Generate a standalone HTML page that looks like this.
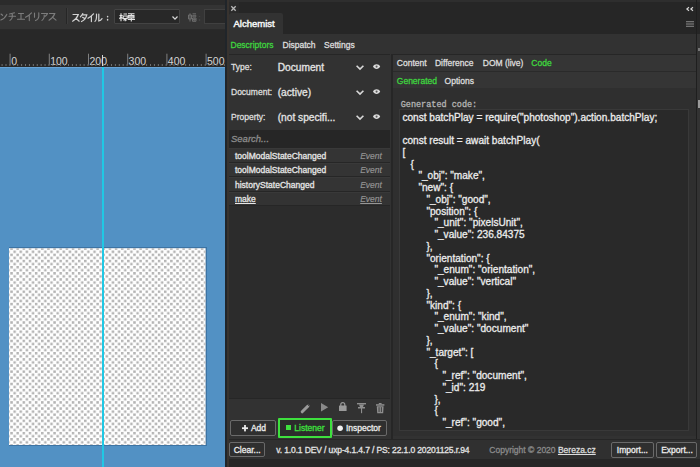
<!DOCTYPE html>
<html><head><meta charset="utf-8">
<style>
*{margin:0;padding:0;box-sizing:border-box}
html,body{width:700px;height:467px;overflow:hidden;background:#262626}
body{position:relative;font-family:"Liberation Sans",sans-serif;font-size:8.5px;color:#dcdcdc;-webkit-text-stroke:0.3px}
.a{position:absolute}
.t{position:absolute;white-space:pre;line-height:1}
.g{color:#3fd43f}
.btn{position:absolute;border:1.2px solid #6a6a6a;border-radius:2px;background:#2f2f2f}
#code{position:absolute;left:402.4px;top:111.66px;width:287px;height:319px;overflow:hidden;font-size:10.1px;line-height:11.75px;color:#ececec}
#code div{height:11.75px;white-space:pre}
svg{position:absolute;overflow:visible}
</style></head><body>

<!-- ===== Photoshop left area ===== -->
<div class="a" style="left:0;top:0;width:226px;height:5px;background:#2b2b2b"></div>
<div class="a" style="left:0;top:5px;width:226px;height:25px;background:#343434"></div>
<div class="a" style="left:0;top:29px;width:226px;height:1px;background:#2a2a2a"></div>
<div class="a" style="left:0;top:30px;width:226px;height:37px;background:#282828"></div>

<!-- options bar katakana: ンチエイリアス -->
<svg style="left:0;top:12px" width="58" height="9" viewBox="0 0 58 9" fill="none" stroke="#7c7c7c" stroke-width="1.1" stroke-linecap="round">
  <path d="M1 2 L2.6 3.3 M0.8 8 Q4.5 6.8 6.8 2.4"/>
  <path d="M14.5 0.8 Q11.5 1.8 9.5 2 M9 4.3 H15.5 M12.3 2 V5 Q12 7.2 10 8.4"/>
  <path d="M18.5 1.5 H23.5 M21 1.5 V7.2 M17.5 7.2 H24.5"/>
  <path d="M31.5 0.8 Q29 3.5 25.5 5.3 M29.3 3.3 V8.6"/>
  <path d="M34.5 1 V5.2 M38.8 0.8 V4.5 Q38.5 7.5 35.5 8.6"/>
  <path d="M41.5 1.5 H47.5 Q47 3 45.3 4.2 M44.2 3 V5 Q43.8 7.2 42 8.4"/>
  <path d="M49.5 1.5 H54.8 Q53.5 5.5 49 8.2 M52.4 5.2 L56 8.2"/>
</svg>
<div class="a" style="left:65.5px;top:8px;width:1px;height:16px;background:#262626"></div>
<div class="a" style="left:66.5px;top:8px;width:1px;height:16px;background:#3c3c3c"></div>
<!-- スタイル： -->
<svg style="left:72px;top:12.5px" width="40" height="9" viewBox="0 0 40 9" fill="none" stroke="#d2d2d2" stroke-width="1.2" stroke-linecap="round">
  <path d="M1 1.5 H6.3 Q5 5.5 0.6 8.2 M3.9 5.2 L7.2 8.2"/>
  <path d="M10.8 0.6 Q9.8 2.6 8.4 3.8 M10.3 1.8 H14.8 Q13.8 6.4 9.5 8.5 M10.5 4.3 L13 5.6"/>
  <path d="M21.5 0.8 Q19 3.5 16 5.3 M19.4 3.3 V8.6"/>
  <path d="M24.5 1 V4.5 Q24.3 7.3 23 8.4 M26.8 1 V8 Q28.8 7.5 30 5.6"/>
  <path d="M35.6 3.4 V3.7 M35.6 6.6 V6.9" stroke-width="1.5"/>
</svg>
<!-- dropdown -->
<div class="a" style="left:113.6px;top:9px;width:66.3px;height:15px;background:#282828;border:1px solid #444;border-radius:1px"></div>
<svg style="left:119.3px;top:13px" width="17" height="8.5" viewBox="0 0 17 8.5" fill="none" stroke="#e2e2e2" stroke-width="1.1">
  <path d="M0.5 2.5 H3.5 M2 0.3 V8.3 M2 3 L0.5 6 M2 3.5 L3.5 5.5 M4.5 1 H8 M4.2 3 H8.2 V5.5 H4.2 Z M4.5 7.5 L5.5 6.2 M7.5 7.5 L6.5 6.2 M6.2 5.5 V8.3"/>
  <path d="M9 0.8 H15.5 M9.4 2.5 H15 V5 H9.4 Z M12.3 0.3 V2.5 M8.8 6.5 H16 M12.3 5 V8.5 M10 3.8 H14.5"/>
</svg>
<svg style="left:172.4px;top:16px" width="6" height="4" viewBox="0 0 6 4" fill="none" stroke="#d8d8d8" stroke-width="1.2"><path d="M0.5 0.5 L3 3.2 L5.5 0.5"/></svg>
<!-- 幅： -->
<svg style="left:187.5px;top:13px" width="14" height="9" viewBox="0 0 14 9" fill="none" stroke="#6c6c6c" stroke-width="1">
  <path d="M0.5 2 H3.5 V6 H0.5 Z M2 0.3 V8.5 M4.5 0.8 H8 M4.8 2.3 H7.8 V3.8 H4.8 Z M4.5 5 H8 V8.3 H4.5 Z M6.2 5 V8.3 M4.5 6.7 H8"/>
  <path d="M11.5 3.2 V3.6 M11.5 6.8 V7.2" stroke-width="1.4"/>
</svg>
<div class="a" style="left:203.5px;top:8.5px;width:24px;height:15px;background:#282828;border:1px solid #404040"></div>

<!-- ruler -->
<svg style="left:0;top:50px" width="226" height="17" viewBox="0 0 226 17">
  <g fill="#808080">
    <rect x="9.6" y="3.7" width="1" height="11"/>
    <rect x="48.8" y="3.7" width="1" height="11"/>
    <rect x="88" y="3.7" width="1" height="11"/>
    <rect x="127.2" y="3.7" width="1" height="11"/>
    <rect x="166.4" y="3.7" width="1" height="11"/>
    <rect x="205.6" y="3.7" width="1" height="11"/>
  </g>
  <g font-family="Liberation Sans" font-size="10.5" fill="#d4d4d4">
    <text x="11.2" y="14.6">0</text>
    <text x="50.2" y="14.6">100</text>
    <text x="89.5" y="14.6">200</text>
    <text x="128.6" y="14.6">300</text>
    <text x="167.8" y="14.6">400</text>
    <text x="207" y="14.6">500</text>
  </g>
</svg>
<div class="a" style="left:0;top:64.2px;width:226px;height:1.5px;background-image:linear-gradient(90deg,#707070 0,#707070 1.4px,transparent 1.4px);background-size:3.92px 2px;background-position:1.6px 0"></div>

<!-- canvas -->
<div class="a" style="left:0;top:67px;width:226px;height:400px;background:#5291c4"></div>
<div class="a" style="left:0;top:67px;width:226px;height:1px;background:#68a4d6"></div>

<!-- document -->
<div class="a" style="left:8.6px;top:246.8px;width:198.2px;height:199.2px;background:#3d74a4"></div>
<svg style="left:9.4px;top:247.6px" width="196.6" height="197.2" viewBox="0 0 197 197.2">
<defs><pattern id="ck" patternUnits="userSpaceOnUse" x="1.29" y="-0.72" width="6.16" height="6.16"><rect x="0" y="0" width="2.5" height="2.5" fill="#b4b4b4"/><rect x="3.08" y="3.08" width="2.5" height="2.5" fill="#b4b4b4"/></pattern></defs>
<rect width="197" height="197.2" fill="#fff"/><rect width="197" height="197.2" fill="url(#ck)"/>
</svg>

<!-- guide -->
<div class="a" style="left:101.6px;top:55px;width:1.6px;height:11px;background:#d6d6d6"></div>
<div class="a" style="left:102px;top:67px;width:2.2px;height:400px;background:#20c8e4"></div>

<!-- ===== Alchemist panel ===== -->
<div class="a" style="left:225.3px;top:0;width:1.9px;height:467px;background:#20252a"></div>
<div class="a" style="left:227.2px;top:0;width:1.6px;height:467px;background:#38332f"></div>
<div class="a" style="left:228.8px;top:0;width:471.2px;height:34px;background:#262626"></div>
<div class="a" style="left:228.8px;top:0;width:471.2px;height:2px;background:#2e2e2e"></div>
<!-- close -->
<div class="a" style="left:228.8px;top:2px;width:10px;height:11px;background:#2a2a2a"></div>
<svg style="left:230.6px;top:6.2px" width="5" height="5" viewBox="0 0 5 5" stroke="#b8b8b8" stroke-width="1.3"><path d="M0.3 0.3 L4.7 4.7 M4.7 0.3 L0.3 4.7"/></svg>
<!-- tab -->
<div class="a" style="left:229px;top:13.3px;width:53.5px;height:20.7px;background:#323232;border-radius:2px 2px 0 0"></div>
<div class="t" style="left:233.5px;top:19px;font-size:9.5px;color:#f6f6f6;-webkit-text-stroke:0.45px">Alchemist</div>
<!-- << and menu -->
<svg style="left:686.2px;top:6.7px" width="8" height="4" viewBox="0 0 8 4" fill="none" stroke="#d8d8d8" stroke-width="1.1"><path d="M3 0.2 L0.8 2 L3 3.8 M7 0.2 L4.8 2 L7 3.8"/></svg>
<svg style="left:685.5px;top:21px" width="8" height="6" viewBox="0 0 8 6" fill="#737373"><rect x="0" y="0" width="8" height="1.3"/><rect x="0" y="2.35" width="8" height="1.3"/><rect x="0" y="4.7" width="8" height="1.3"/></svg>
<div class="a" style="left:696.2px;top:0;width:1.2px;height:439px;background:#1f1f1f"></div>

<div class="a" style="left:228.8px;top:34px;width:467.4px;height:405px;background:#323232"></div>
<div class="a" style="left:697.4px;top:34px;width:2.6px;height:405px;background:#333"></div>
<div class="a" style="left:698px;top:48px;width:2px;height:3px;background:#777"></div>
<div class="a" style="left:697.5px;top:100px;width:2.5px;height:8px;background:#9a9a9a"></div>

<!-- top nav -->
<div class="t g" style="left:230.5px;top:40.8px">Descriptors</div>
<div class="t" style="left:282.5px;top:40.8px">Dispatch</div>
<div class="t" style="left:324px;top:40.8px">Settings</div>

<!-- ===== left pane ===== -->
<div class="a" style="left:228.8px;top:53.5px;width:161.7px;height:1px;background:#262626"></div>
<div class="t" style="left:231px;top:62.8px">Type:</div>
<div class="t" style="left:231px;top:87.8px">Document:</div>
<div class="t" style="left:231px;top:112.8px">Property:</div>
<div class="t" style="left:277.7px;top:62.9px;font-size:10.2px;color:#e4e4e4">Document</div>
<div class="t" style="left:277.7px;top:87.9px;font-size:10.2px;color:#e4e4e4">(active)</div>
<div class="t" style="left:277.7px;top:112.9px;font-size:10.2px;color:#e4e4e4">(not specifi...</div>
<!-- chevrons + eyes -->
<svg style="left:356.3px;top:64.9px" width="8" height="5" viewBox="0 0 8 5" fill="none" stroke="#d8d8d8" stroke-width="1.6"><path d="M0.6 0.7 L4 4.1 L7.4 0.7"/></svg>
<svg style="left:356.3px;top:89.9px" width="8" height="5" viewBox="0 0 8 5" fill="none" stroke="#d8d8d8" stroke-width="1.6"><path d="M0.6 0.7 L4 4.1 L7.4 0.7"/></svg>
<svg style="left:356.3px;top:114.9px" width="8" height="5" viewBox="0 0 8 5" fill="none" stroke="#d8d8d8" stroke-width="1.6"><path d="M0.6 0.7 L4 4.1 L7.4 0.7"/></svg>
<svg style="left:372.6px;top:64px" width="7.2" height="5.2" viewBox="0 0 7.2 5.2"><path d="M0 2.6 C1.4 -0.6 5.8 -0.6 7.2 2.6 C5.8 5.8 1.4 5.8 0 2.6 Z" fill="#dcdcdc"/><circle cx="3.6" cy="2.6" r="1.05" fill="#5a5a5a"/></svg>
<svg style="left:372.6px;top:89px" width="7.2" height="5.2" viewBox="0 0 7.2 5.2"><path d="M0 2.6 C1.4 -0.6 5.8 -0.6 7.2 2.6 C5.8 5.8 1.4 5.8 0 2.6 Z" fill="#dcdcdc"/><circle cx="3.6" cy="2.6" r="1.05" fill="#5a5a5a"/></svg>
<svg style="left:372.6px;top:114px" width="7.2" height="5.2" viewBox="0 0 7.2 5.2"><path d="M0 2.6 C1.4 -0.6 5.8 -0.6 7.2 2.6 C5.8 5.8 1.4 5.8 0 2.6 Z" fill="#dcdcdc"/><circle cx="3.6" cy="2.6" r="1.05" fill="#5a5a5a"/></svg>

<!-- search -->
<div class="a" style="left:228.8px;top:129.5px;width:161.7px;height:18.5px;background:#262626"></div>
<div class="t" style="left:231px;top:134.3px;font-size:9.5px;font-style:italic;color:#8c8c8c">Search...</div>

<!-- list -->
<div class="a" style="left:228.8px;top:148px;width:161.7px;height:250px;background:#2c2c2c"></div>
<div class="a" style="left:228.8px;top:148px;width:161.7px;height:14.6px;background:#343434;border-top:1px solid #393939;border-bottom:1px solid #262626"></div>
<div class="a" style="left:228.8px;top:162.6px;width:161.7px;height:14.6px;background:#343434;border-top:1px solid #393939;border-bottom:1px solid #262626"></div>
<div class="a" style="left:228.8px;top:177.2px;width:161.7px;height:14.6px;background:#343434;border-top:1px solid #393939;border-bottom:1px solid #262626"></div>
<div class="a" style="left:228.8px;top:191.8px;width:161.7px;height:14.6px;background:#333333;border-top:1px solid #393939;border-bottom:1px solid #262626"></div>
<div class="t" style="left:235px;top:151.8px;color:#e6e6e6">toolModalStateChanged</div>
<div class="t" style="left:235px;top:166.4px;color:#e6e6e6">toolModalStateChanged</div>
<div class="t" style="left:235px;top:181px;color:#e6e6e6">historyStateChanged</div>
<div class="t" style="left:235px;top:195.3px;color:#e6e6e6;text-decoration:underline">make</div>
<div class="t" style="left:360.2px;top:151.8px;font-style:italic;color:#969696;-webkit-text-stroke:0.15px">Event</div>
<div class="t" style="left:360.2px;top:166.4px;font-style:italic;color:#969696;-webkit-text-stroke:0.15px">Event</div>
<div class="t" style="left:360.2px;top:181px;font-style:italic;color:#969696;-webkit-text-stroke:0.15px">Event</div>
<div class="t" style="left:360.2px;top:195.3px;font-style:italic;color:#969696;-webkit-text-stroke:0.15px;text-decoration:underline">Event</div>

<!-- icon row -->
<div class="a" style="left:228.8px;top:397.5px;width:161.7px;height:1.2px;background:#262626"></div>
<svg style="left:300px;top:402.5px" width="11" height="11" viewBox="0 0 11 11"><path d="M2.2 8.8 L8 3" stroke="#9a9a9a" stroke-width="3" stroke-linecap="round"/><path d="M7.6 1.6 L9.4 3.4" stroke="#323232" stroke-width="0.8"/></svg>
<svg style="left:321px;top:403.4px" width="7.2" height="8.6" viewBox="0 0 7.2 8.6" fill="#8a8a8a"><path d="M0 0 L7.2 4.3 L0 8.6 Z"/></svg>
<svg style="left:339.3px;top:402.3px" width="7.6" height="9" viewBox="0 0 7.6 9"><path d="M1.8 4 V2.6 A2 2 0 0 1 5.8 2.6 V4" fill="none" stroke="#9a9a9a" stroke-width="1.2"/><rect x="0" y="3.6" width="7.6" height="5.4" rx="0.5" fill="#9a9a9a"/></svg>
<svg style="left:357px;top:402.7px" width="9" height="10.2" viewBox="0 0 9 10.2" fill="#8e8e8e"><rect x="0" y="0" width="9" height="1.4"/><path d="M2 1.4 H7 L6 4 H8 V5.4 H1 V4 H3 Z"/><rect x="4" y="5" width="1.1" height="5.2"/></svg>
<svg style="left:375.8px;top:402.7px" width="8.4" height="10.2" viewBox="0 0 8.4 10.2" fill="#8e8e8e"><rect x="2.8" y="0" width="2.8" height="1.2"/><rect x="0" y="1.2" width="8.4" height="1.5"/><path d="M0.8 3.2 H7.6 L7.2 10.2 H1.2 Z"/><rect x="2.6" y="4.2" width="0.9" height="4.8" fill="#353535"/><rect x="4.9" y="4.2" width="0.9" height="4.8" fill="#353535"/></svg>

<!-- buttons -->
<div class="btn" style="left:230.3px;top:420.1px;width:45.8px;height:15.5px"></div>
<svg style="left:241.9px;top:424.9px" width="6" height="6.4" viewBox="0 0 6 6.4" fill="#ececec"><rect x="2.1" y="0" width="1.8" height="6.4"/><rect x="0" y="2.3" width="6" height="1.8"/></svg>
<div class="t" style="left:250.9px;top:423.8px;color:#ececec">Add</div>

<div class="a" style="left:277.6px;top:418px;width:54.8px;height:20.1px;border:2.3px solid #3ee03e;border-radius:1px;background:#2c2c2c"></div>
<div class="a" style="left:285.7px;top:425.3px;width:5.2px;height:5.1px;background:#3ee03e"></div>
<div class="t g" style="left:294.3px;top:424.1px;color:#3ee03e">Listener</div>

<div class="btn" style="left:332.4px;top:420.1px;width:55px;height:15.5px"></div>
<svg style="left:337px;top:425.4px" width="6.2" height="6.2" viewBox="0 0 6.2 6.2"><circle cx="3.1" cy="3.2" r="2.8" fill="#f0f0f0"/></svg>
<div class="t" style="left:345.9px;top:424.1px;color:#ececec">Inspector</div>

<!-- ===== right pane ===== -->
<div class="a" style="left:390.5px;top:53.5px;width:2.2px;height:385.5px;background:#262626"></div>
<div class="a" style="left:392.7px;top:53.5px;width:303.8px;height:1px;background:#262626"></div>
<div class="a" style="left:392.7px;top:54.5px;width:303.8px;height:16.5px;background:#353535"></div>
<div class="t" style="left:396.8px;top:58.7px">Content</div>
<div class="t" style="left:434.9px;top:58.7px">Difference</div>
<div class="t" style="left:482.8px;top:58.7px">DOM (live)</div>
<div class="t g" style="left:531.3px;top:58.7px">Code</div>
<div class="a" style="left:392.7px;top:71px;width:303.8px;height:1px;background:#2a2a2a"></div>
<div class="a" style="left:392.7px;top:72px;width:303.8px;height:16px;background:#353535"></div>
<div class="t g" style="left:396.8px;top:76.5px">Generated</div>
<div class="t" style="left:444.6px;top:76.5px">Options</div>
<div class="a" style="left:392.7px;top:88px;width:303.8px;height:348px;background:#2f2f2f"></div>
<div class="t" style="left:400.7px;top:100.5px;font-family:'Liberation Mono',monospace;font-size:8.5px;color:#b4b4b4">Generated code:</div>
<div class="a" style="left:399.3px;top:109.3px;width:290.2px;height:321.5px;background:#292929;border:1.5px solid #393939"></div>

<div id="code">
<div>const batchPlay = require("photoshop").action.batchPlay;</div>
<div></div>
<div>const result = await batchPlay(</div>
<div>[</div>
<div style="padding-left:8px">{</div>
<div style="padding-left:16px">"_obj": "make",</div>
<div style="padding-left:16px">"new": {</div>
<div style="padding-left:24px">"_obj": "good",</div>
<div style="padding-left:24px">"position": {</div>
<div style="padding-left:32px">"_unit": "pixelsUnit",</div>
<div style="padding-left:32px">"_value": 236.84375</div>
<div style="padding-left:24px">},</div>
<div style="padding-left:24px">"orientation": {</div>
<div style="padding-left:32px">"_enum": "orientation",</div>
<div style="padding-left:32px">"_value": "vertical"</div>
<div style="padding-left:24px">},</div>
<div style="padding-left:24px">"kind": {</div>
<div style="padding-left:32px">"_enum": "kind",</div>
<div style="padding-left:32px">"_value": "document"</div>
<div style="padding-left:24px">},</div>
<div style="padding-left:24px">"_target": [</div>
<div style="padding-left:32px">{</div>
<div style="padding-left:40px">"_ref": "document",</div>
<div style="padding-left:40px">"_id": 219</div>
<div style="padding-left:32px">},</div>
<div style="padding-left:32px">{</div>
<div style="padding-left:40px">"_ref": "good",</div>
</div>

<!-- ===== footer ===== -->
<div class="a" style="left:228.8px;top:439px;width:471.2px;height:20px;background:#303030"></div>
<div class="a" style="left:228.8px;top:438.5px;width:471.2px;height:1.2px;background:#262626"></div>
<div class="btn" style="left:229.4px;top:442px;width:35.6px;height:14.6px"></div>
<div class="t" style="left:233.7px;top:445.9px;color:#ececec">Clear...</div>
<div class="t" style="left:276.2px;top:445.5px;color:#e2e2e2;letter-spacing:-0.12px">v. 1.0.1 DEV / uxp-4.1.4.7 / PS: 22.1.0 20201125.r.94</div>
<div class="t" style="left:489.3px;top:445.5px;color:#8a8a8a">Copyright © 2020 <span style="color:#dcdcdc;text-decoration:underline">Bereza.cz</span></div>
<div class="btn" style="left:611.4px;top:441.6px;width:42.2px;height:16.1px"></div>
<div class="t" style="left:616.8px;top:445.5px;color:#ececec">Import...</div>
<div class="btn" style="left:656.4px;top:441.6px;width:41px;height:16.1px"></div>
<div class="t" style="left:661.2px;top:445.5px;color:#ececec">Export...</div>
<div class="a" style="left:228.8px;top:458.8px;width:471.2px;height:8.2px;background:#262626"></div>

</body></html>
